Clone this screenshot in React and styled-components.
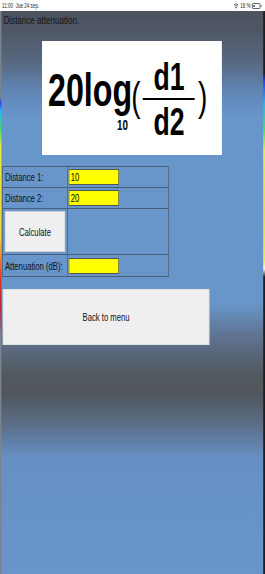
import React from 'react';
import styled, { createGlobalStyle } from 'styled-components';

const GlobalStyle = createGlobalStyle`
  html, body {
    margin: 0;
    padding: 0;
    width: 265px;
    height: 574px;
    overflow: hidden;
    background: #fff;
  }
  body {
    font-family: "Liberation Sans", Arial, sans-serif;
  }
`;

// the capture is an iPad screen squeezed into 265px, so the page is laid
// out at its own width and squeezed the same way
const Squeeze = styled.div`
  width: 379px;
  height: 574px;
  transform: scaleX(0.7);
  transform-origin: 0 0;
  display: flex;
  flex-direction: column;
`;

const StatusBar = styled.div`
  height: 11px;
  flex-shrink: 0;
  display: flex;
  align-items: center;
  justify-content: space-between;
  padding: 0 5px 0 3px;
  font-size: 6.5px;
  color: #222;
  background: #fff;
`;

const StatusRight = styled.div`
  display: flex;
  align-items: center;
  gap: 2px;
`;

const Battery = styled.div`
  position: relative;
  width: 12px;
  height: 6px;
  box-sizing: border-box;
  border: 1px solid #444;
  border-radius: 1.5px;
  margin-right: 2px;

  &::before {
    content: '';
    position: absolute;
    left: 1px;
    top: 1px;
    bottom: 1px;
    width: 2px;
    background: #444;
  }
  &::after {
    content: '';
    position: absolute;
    right: -3px;
    top: 1px;
    width: 1.5px;
    height: 2px;
    background: #444;
    border-radius: 0 1px 1px 0;
  }
`;

const Screen = styled.div`
  flex: 1;
  position: relative;
  display: flex;
  flex-direction: column;
  align-items: flex-start;
  background: linear-gradient(
    to bottom,
    #4c525e 0px,
    #4f5766 20px,
    #57687f 50px,
    #6185b4 80px,
    #6895ca 105px,
    #6896ca 292px,
    #5f7392 325px,
    #535a62 360px,
    #51565c 382px,
    #5a6c85 412px,
    #6690c4 447px,
    #6995ca 563px
  );

  &::before {
    content: '';
    position: absolute;
    left: 0;
    top: 0;
    bottom: 0;
    width: 2px;
    background: linear-gradient(
      to bottom,
      #7c838d 0px,
      #7c838d 86px,
      #2a3cf0 92px,
      #25b8f5 100px,
      #3fdc6c 118px,
      #e4ee40 135px,
      #f0d83a 225px,
      #f08a32 245px,
      #e03028 268px,
      #b02838 298px,
      #7c838d 325px,
      #7c838d 563px
    );
  }

  &::after {
    content: '';
    position: absolute;
    right: 0;
    top: 0;
    bottom: 0;
    width: 3px;
    background: linear-gradient(
      to bottom,
      #1e1f22 0px,
      #1e1f22 62px,
      #2a3cf0 70px,
      #25b8f5 92px,
      #40e070 118px,
      #e6f040 140px,
      #f3d840 200px,
      #e8f040 250px,
      #f6f6e0 258px,
      #1e1f22 266px,
      #1e1f22 563px
    );
  }
`;

const Title = styled.div`
  font-size: 11.5px;
  line-height: 14px;
  padding: 2px 0 0 5px;
  color: #141414;
`;

const FormulaBox = styled.div`
  margin: 14px 0 0 60px;
  width: 257px;
  height: 114px;
  box-sizing: border-box;
  padding-left: 8.6px;
  background: #fff;
  color: #000;
  display: flex;
  align-items: flex-start;
  font-family: "Liberation Sans", Arial, sans-serif;
  line-height: 1;
`;

const Main = styled.span`
  font-size: 46px;
  font-weight: bold;
  margin-top: 26px;
`;

const Sub = styled.span`
  font-size: 14px;
  font-weight: bold;
  margin: 77px 0 0 -21.6px;
`;

const Paren = styled.span`
  font-size: 40px;
  margin: 36px 0 0 ${p => p.$gap}px;
`;

const Fraction = styled.div`
  width: 74px;
  margin: 17px 0 0 3.7px;
  display: flex;
  flex-direction: column;
  align-items: center;
  font-size: 38px;
  font-weight: bold;
`;

const Bar = styled.div`
  align-self: stretch;
  height: 2px;
  margin: 2px 0 3px;
  background: #000;
`;

const Table = styled.table`
  margin: 11px 0 0 3px;
  width: 238px;
  border-collapse: collapse;
`;

const Cell = styled.td`
  border: 1px solid #4b5d75;
  padding: 0;
  height: ${p => p.$h}px;
  width: ${p => (p.$w ? `${p.$w}px` : 'auto')};
  vertical-align: middle;
`;

const Label = styled.span`
  display: block;
  padding-left: 3px;
  font-size: 11px;
  color: #111;
  white-space: nowrap;
`;

const Field = styled.input`
  display: block;
  margin-left: 1px;
  width: 72px;
  height: 16px;
  box-sizing: border-box;
  border: 1px solid #555;
  background: #ffff00;
  padding: 0 2px;
  font-family: "Liberation Sans", Arial, sans-serif;
  font-size: 11px;
  color: #000;
  outline: none;
`;

const Button = styled.button`
  display: block;
  width: ${p => p.$w}px;
  height: ${p => p.$h}px;
  box-sizing: border-box;
  background: #efefef;
  border: 1px solid #d2d2d2;
  padding: 0;
  font-family: "Liberation Sans", Arial, sans-serif;
  font-size: 11px;
  color: #111;
  cursor: pointer;
`;

const CalcButton = styled(Button)`
  margin-left: 3px;
`;

const BackButton = styled(Button)`
  margin: 12px 0 0 4px;
  border-color: #e2e2e2;
`;

const Wifi = () => (
  <svg width="7" height="6" viewBox="0 0 14 11">
    <path d="M7 11 L4.6 8.2 A3.6 3.6 0 0 1 9.4 8.2 Z" fill="#333" />
    <path d="M2.6 6 A6.4 6.4 0 0 1 11.4 6" stroke="#333" strokeWidth="1.8" fill="none" />
    <path d="M0.6 3.6 A9.4 9.4 0 0 1 13.4 3.6" stroke="#333" strokeWidth="1.8" fill="none" />
  </svg>
);

export default function App() {
  return (
    <>
      <GlobalStyle />
      <Squeeze>
        <StatusBar>
          <span>11:00&nbsp;&nbsp;Jue 24 sep.</span>
          <StatusRight>
            <Wifi />
            <span>16 %</span>
            <Battery />
          </StatusRight>
        </StatusBar>
        <Screen>
          <Title>Distance attenuation.</Title>
          <FormulaBox>
            <Main>20log</Main>
            <Sub>10</Sub>
            <Paren $gap={4.6}>(</Paren>
            <Fraction>
              <span>d1</span>
              <Bar />
              <span>d2</span>
            </Fraction>
            <Paren $gap={4.5}>)</Paren>
          </FormulaBox>
          <Table>
            <tbody>
              <tr>
                <Cell $h={20} $w={92}><Label>Distance 1:</Label></Cell>
                <Cell $h={20}><Field defaultValue="10" /></Cell>
              </tr>
              <tr>
                <Cell $h={20}><Label>Distance 2:</Label></Cell>
                <Cell $h={20}><Field defaultValue="20" /></Cell>
              </tr>
              <tr>
                <Cell $h={45}><CalcButton $w={86} $h={41}>Calculate</CalcButton></Cell>
                <Cell $h={45} />
              </tr>
              <tr>
                <Cell $h={21}><Label>Attenuation (dB):</Label></Cell>
                <Cell $h={21}><Field defaultValue="" /></Cell>
              </tr>
            </tbody>
          </Table>
          <BackButton $w={295} $h={56}>Back to menu</BackButton>
        </Screen>
      </Squeeze>
    </>
  );
}
